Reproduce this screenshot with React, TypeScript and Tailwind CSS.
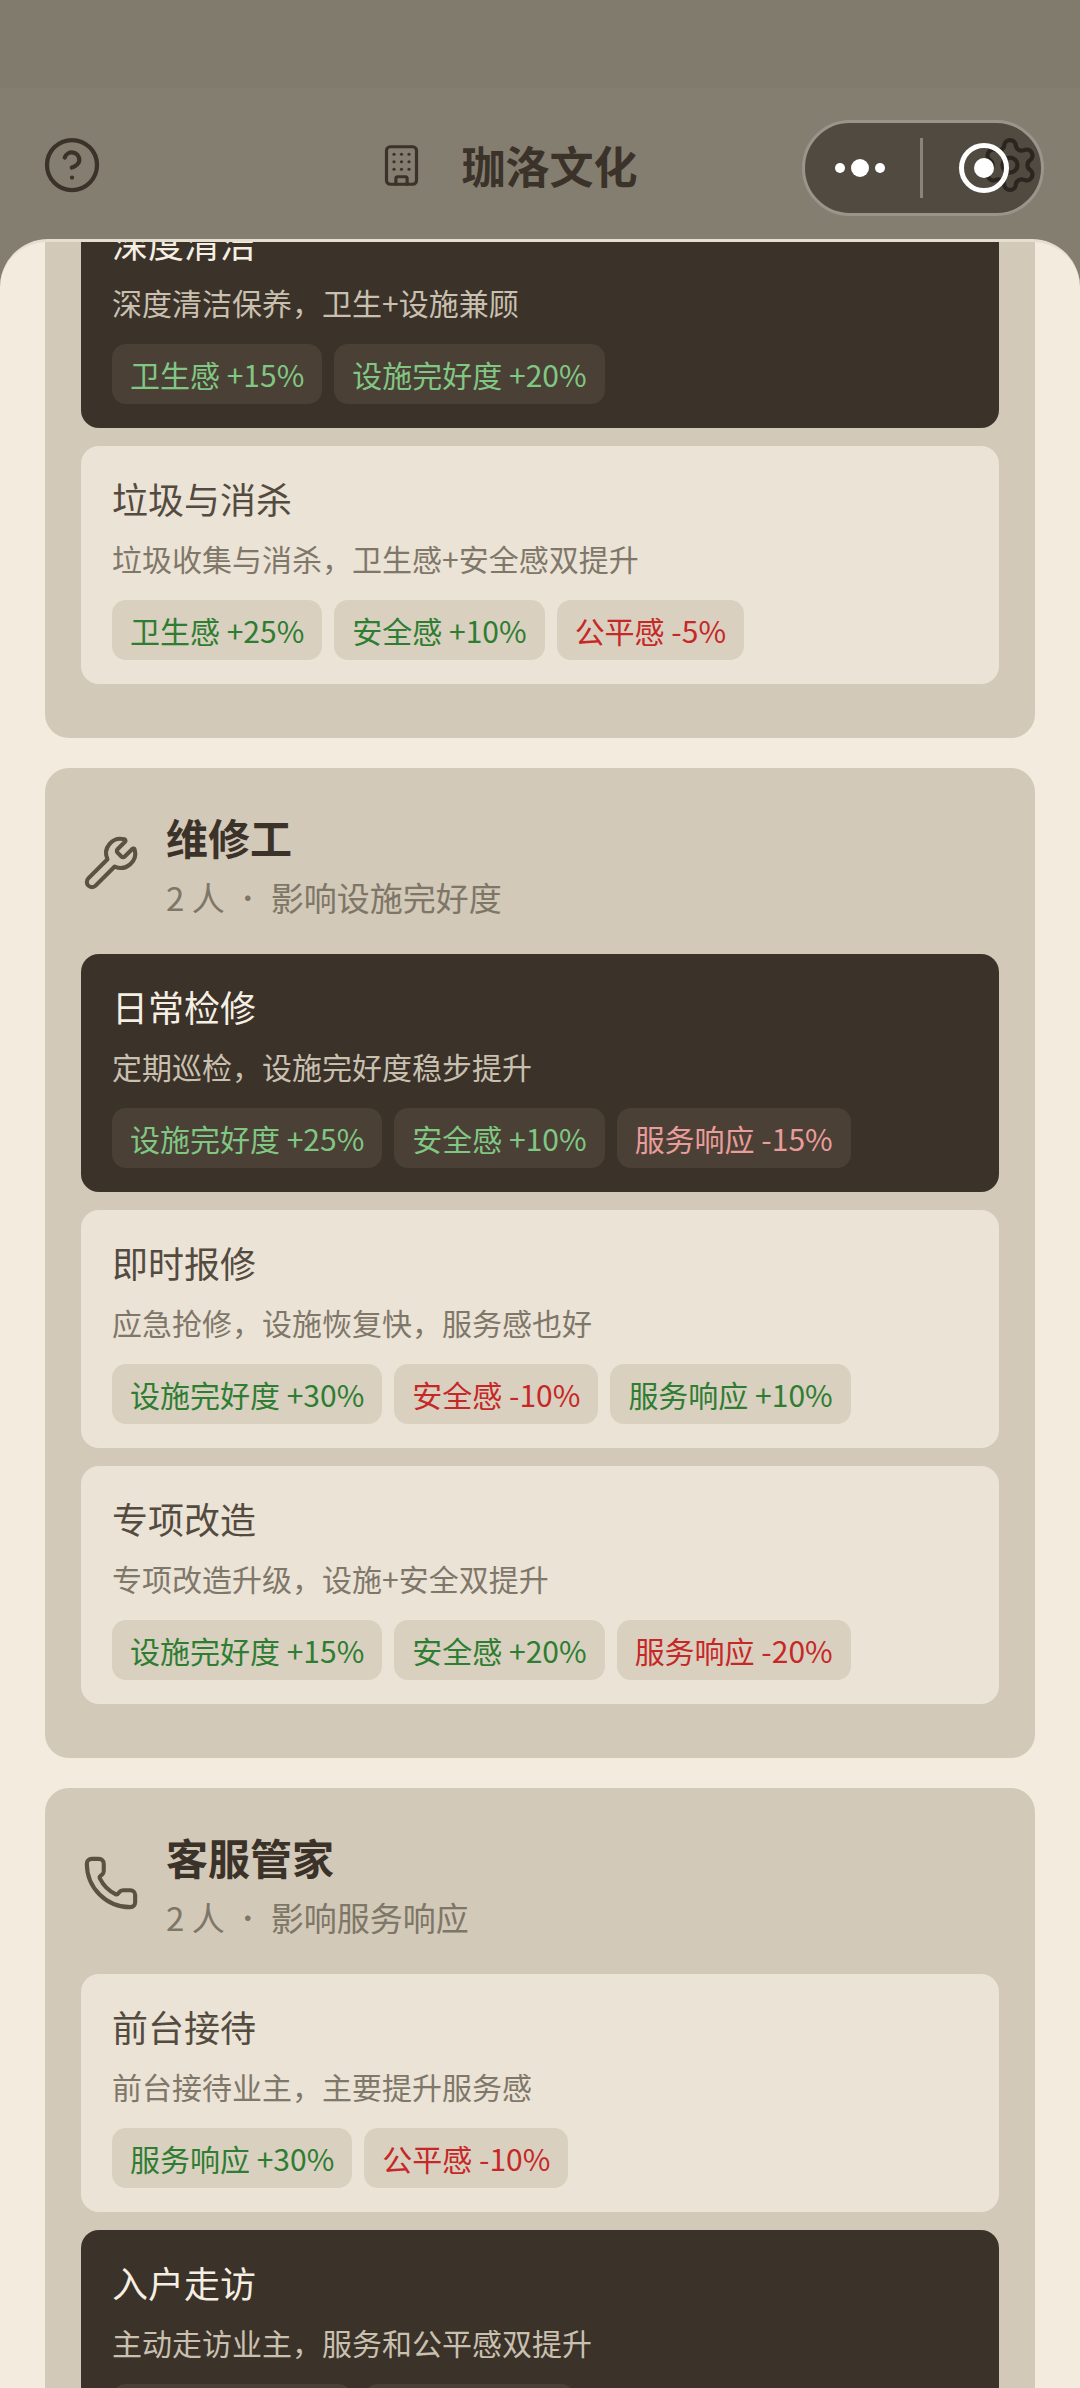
import React from "react";
import { Building, CircleHelp, Phone, Settings, Wrench } from "lucide-react";

type Effect = { label: string; good: boolean };
type Plan = { title: string; desc: string; active?: boolean; effects: Effect[] };

const e = (label: string, good: boolean): Effect => ({ label, good });

const cleanerPlans: Plan[] = [
  {
    title: "深度清洁",
    desc: "深度清洁保养，卫生+设施兼顾",
    active: true,
    effects: [e("卫生感 +15%", true), e("设施完好度 +20%", true)],
  },
  {
    title: "垃圾与消杀",
    desc: "垃圾收集与消杀，卫生感+安全感双提升",
    effects: [e("卫生感 +25%", true), e("安全感 +10%", true), e("公平感 -5%", false)],
  },
];

const repairPlans: Plan[] = [
  {
    title: "日常检修",
    desc: "定期巡检，设施完好度稳步提升",
    active: true,
    effects: [e("设施完好度 +25%", true), e("安全感 +10%", true), e("服务响应 -15%", false)],
  },
  {
    title: "即时报修",
    desc: "应急抢修，设施恢复快，服务感也好",
    effects: [e("设施完好度 +30%", true), e("安全感 -10%", false), e("服务响应 +10%", true)],
  },
  {
    title: "专项改造",
    desc: "专项改造升级，设施+安全双提升",
    effects: [e("设施完好度 +15%", true), e("安全感 +20%", true), e("服务响应 -20%", false)],
  },
];

const servicePlans: Plan[] = [
  {
    title: "前台接待",
    desc: "前台接待业主，主要提升服务感",
    effects: [e("服务响应 +30%", true), e("公平感 -10%", false)],
  },
  {
    title: "入户走访",
    desc: "主动走访业主，服务和公平感双提升",
    active: true,
    effects: [e("服务响应 +25%", true), e("公平感 +10%", true)],
  },
];

const PlanCard = ({ plan }: { plan: Plan }) => (
  <div
    className={`mb-[18px] h-[238px] rounded-[18px] pl-[31px] pt-[27px] ${
      plan.active ? "bg-[#3b3229]" : "bg-[#ebe3d6]"
    }`}
  >
    <div className={`text-[36px] leading-[50px] ${plan.active ? "text-[#f5efe3]" : "text-[#544b40]"}`}>
      {plan.title}
    </div>
    <div className={`mt-[14px] text-[30px] leading-[42px] ${plan.active ? "text-[#c9c0b0]" : "text-[#7f7769]"}`}>
      {plan.desc}
    </div>
    <div className="mt-[21px] flex gap-[12px]">
      {plan.effects.map((effect) => (
        <span
          key={effect.label}
          className={`flex h-[60px] items-center rounded-[14px] px-[18px] text-[30px] ${
            plan.active ? "bg-[#4a4036]" : "bg-[#d9d0bf]"
          } ${
            plan.active
              ? effect.good
                ? "text-[#81c784]"
                : "text-[#e99c9a]"
              : effect.good
                ? "text-[#2e7d32]"
                : "text-[#c62828]"
          }`}
        >
          {effect.label}
        </span>
      ))}
    </div>
  </div>
);

const Section = ({
  icon,
  title,
  sub,
  plans,
}: {
  icon?: React.ReactNode;
  title?: string;
  sub?: string;
  plans: Plan[];
}) => (
  <div className={`mb-[30px] rounded-[24px] bg-[#d2c9b8] px-[36px] pb-[36px] ${title ? "pt-[36px]" : ""}`}>
    {title && (
      <div className="mb-[34px] flex items-center gap-[26px]">
        {icon}
        <div>
          <div className="text-[42px] font-bold leading-[66px] text-[#3b3229]">{title}</div>
          <div className="mt-[4px] flex items-center text-[33px] leading-[46px] text-[#7e7667]">
            <span>2 人</span>
            <span className="mx-[10px] text-[26px]">•</span>
            <span>{sub}</span>
          </div>
        </div>
      </div>
    )}
    {plans.map((plan) => (
      <PlanCard key={plan.title} plan={plan} />
    ))}
  </div>
);

const App = () => {
  return (
    <div className="flex h-screen flex-col overflow-hidden bg-[#847e71] font-['Noto_Sans_CJK_SC','Noto_Sans',sans-serif]">
      <div className="relative shrink-0">
        <div className="h-[88px] bg-[#817b6e]" />
        <div className="flex h-[151px] items-center justify-between pl-[42px] pr-[40px] pt-[3px]">
          <CircleHelp size={60} strokeWidth={1.7} className="text-[#3b3229]" />
          <div className="mr-[66px] flex items-center gap-[38px]">
            <Building size={45} strokeWidth={1.7} className="text-[#3b3229]" />
            <div className="text-[44px] font-bold text-[#3b3229]">珈洛文化</div>
          </div>
          <Settings size={60} strokeWidth={1.7} className="text-[#26211b]" />
        </div>

        {/* wechat capsule sits over the gear */}
        <div className="absolute right-[36px] top-[120px] flex h-[96px] w-[242px] items-center rounded-full border-[3px] border-[#9a958a] bg-[#2d2822]/60">
          <div className="flex w-[115px] items-center justify-center gap-[6px] pr-[6px]">
            <span className="h-[10px] w-[10px] rounded-full bg-white" />
            <span className="h-[18px] w-[18px] rounded-full bg-white" />
            <span className="h-[10px] w-[10px] rounded-full bg-white" />
          </div>
          <div className="h-[60px] w-[3px] bg-[#8a857b]" />
          <div className="flex flex-1 items-center justify-center pl-[4px]">
            <div className="flex h-[50px] w-[50px] items-center justify-center rounded-full border-[5px] border-white">
              <span className="h-[20px] w-[20px] rounded-full bg-white" />
            </div>
          </div>
        </div>
      </div>

      <div className="min-h-0 flex-1 overflow-hidden rounded-t-[48px] border-t-[3px] border-[#e6dece] bg-[#f3ebdd]">
        <div className="-mt-[52px] px-[45px]">
          <Section plans={cleanerPlans} />
          <Section
            icon={<Wrench size={58} strokeWidth={1.7} className="ml-[1px] mt-[2px] shrink-0 text-[#5c5244]" />}
            title="维修工"
            sub="影响设施完好度"
            plans={repairPlans}
          />
          <Section
            icon={<Phone size={58} strokeWidth={1.7} className="ml-[1px] mt-[2px] shrink-0 text-[#5c5244]" />}
            title="客服管家"
            sub="影响服务响应"
            plans={servicePlans}
          />
        </div>
      </div>
    </div>
  );
};

export default App;
